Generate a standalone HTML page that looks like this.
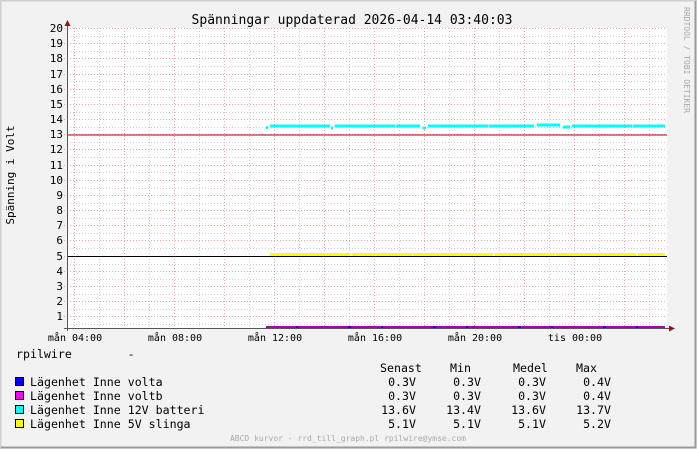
<!DOCTYPE html>
<html><head><meta charset="utf-8"><style>
html,body{margin:0;padding:0;background:#f2f2f2}
svg{display:block}
text{font-family:"DejaVu Sans Mono","Liberation Mono",monospace;fill:#000}
</style></head><body>
<svg width="697" height="449" viewBox="0 0 697 449" xmlns="http://www.w3.org/2000/svg" font-size="10">
<rect x="0" y="0" width="697" height="449" fill="#f2f2f2"/>
<path d="M0.5 449V0.5H697" stroke="#cfcfcf" stroke-width="2" fill="none"/>
<path d="M1 447.5H695.5V1" stroke="#9a9a9a" stroke-width="2" fill="none"/>
<rect x="67" y="28" width="600" height="300" fill="#fff"/>
<path stroke="#d0d0d0" stroke-width="1" stroke-dasharray="1,2" fill="none" d="M67 324.5H667M67 309.5H667M67 294.5H667M67 279.5H667M67 264.5H667M67 248.5H667M67 233.5H667M67 218.5H667M67 203.5H667M67 188.5H667M67 172.5H667M67 157.5H667M67 142.5H667M67 127.5H667M67 112.5H667M67 97.5H667M67 81.5H667M67 66.5H667M67 51.5H667M67 36.5H667"/>
<path stroke="#d0d0d0" stroke-width="1" stroke-dasharray="1,2" fill="none" d="M99.5 28V328M149.5 28V328M199.5 28V328M249.5 28V328M299.5 28V328M349.5 28V328M399.5 28V328M449.5 28V328M499.5 28V328M549.5 28V328M599.5 28V328M649.5 28V328"/>
<path stroke="#f4a6a6" stroke-width="1" stroke-dasharray="1,2" fill="none" d="M64 316.5H667M64 301.5H667M64 286.5H667M64 271.5H667M64 256.5H667M64 240.5H667M64 225.5H667M64 210.5H667M64 195.5H667M64 180.5H667M64 165.5H667M64 149.5H667M64 134.5H667M64 119.5H667M64 104.5H667M64 89.5H667M64 74.5H667M64 58.5H667M64 43.5H667M64 28.5H667"/>
<path stroke="#f4a6a6" stroke-width="1" stroke-dasharray="1,2" fill="none" d="M74.5 28V331M124.5 28V331M174.5 28V331M224.5 28V331M274.5 28V331M324.5 28V331M374.5 28V331M424.5 28V331M474.5 28V331M524.5 28V331M574.5 28V331M624.5 28V331"/>
<line x1="67" y1="135" x2="667" y2="135" stroke="#b00000" stroke-width="1"/>
<line x1="67" y1="256.5" x2="667" y2="256.5" stroke="#000" stroke-width="1"/>
<path d="M266 127.5H268M270 126H330M331 128H333M335 126H420M423 128H426M428 126H535M537 125H560M563 127H570M572 126H665" stroke="#00ffff" stroke-width="3" fill="none" stroke-dasharray="60,1,45,2,70,1"/>
<path d="M270 254.5H665" stroke="#ffff00" stroke-width="3" fill="none" stroke-dasharray="80,2,60,1"/>
<path d="M266 327H665" stroke="#0000ff" stroke-width="2" fill="none"/>
<path d="M266 327H665" stroke="#aa00aa" stroke-width="2" fill="none" stroke-dasharray="30,2,50,3"/>
<line x1="67.5" y1="24" x2="67.5" y2="331" stroke="#555" stroke-width="1"/>
<line x1="64" y1="328.5" x2="671" y2="328.5" stroke="#555" stroke-width="1"/>
<path d="M64.5 26L67.5 20L70.5 26Z" fill="#8b1a1a"/>
<path d="M669 325.5L675 328.5L669 331.5Z" fill="#8b1a1a"/>
<g text-anchor="end" font-size="11">
<text x="63" y="32">20</text><text x="63" y="47">19</text><text x="63" y="62">18</text><text x="63" y="78">17</text><text x="63" y="93">16</text><text x="63" y="108">15</text><text x="63" y="123">14</text><text x="63" y="138">13</text><text x="63" y="153">12</text><text x="63" y="169">11</text><text x="63" y="184">10</text><text x="63" y="199">9</text><text x="63" y="214">8</text><text x="63" y="229">7</text><text x="63" y="244">6</text><text x="63" y="260">5</text><text x="63" y="275">4</text><text x="63" y="290">3</text><text x="63" y="305">2</text><text x="63" y="320">1</text>
</g>
<g text-anchor="middle">
<text x="75" y="341">mån 04:00</text><text x="175" y="341">mån 08:00</text><text x="275" y="341">mån 12:00</text><text x="375" y="341">mån 16:00</text><text x="475" y="341">mån 20:00</text><text x="575" y="341">tis 00:00</text>
</g>
<text x="352" y="24" text-anchor="middle" font-size="13">Spänningar uppdaterad 2026-04-14 03:40:03</text>
<text transform="translate(14,175) rotate(-90)" text-anchor="middle" font-size="11">Spänning i Volt</text>
<text transform="translate(684,60) rotate(90)" text-anchor="middle" font-size="8" style="fill:#aaa">RRDTOOL / TOBI OETIKER</text>
<text x="16" y="358" font-size="11.6" xml:space="preserve">rpilwire        -</text>
<text x="380" y="372" font-size="11.6">Senast</text><text x="450" y="372" font-size="11.6">Min</text><text x="513" y="372" font-size="11.6">Medel</text><text x="576" y="372" font-size="11.6">Max</text>
<rect x="15.5" y="377.5" width="8" height="8" fill="#0000ff" stroke="#000"/>
<rect x="15.5" y="391.5" width="8" height="8" fill="#ff00ff" stroke="#000"/>
<rect x="15.5" y="405.5" width="8" height="8" fill="#00ffff" stroke="#000"/>
<rect x="15.5" y="419.5" width="8" height="8" fill="#ffff00" stroke="#000"/>
<g font-size="11.6">
<text x="30" y="386">Lägenhet Inne volta</text>
<text x="30" y="400">Lägenhet Inne voltb</text>
<text x="30" y="414">Lägenhet Inne 12V batteri</text>
<text x="30" y="428">Lägenhet Inne 5V slinga</text>
</g>
<g font-size="11.6" text-anchor="end">
<text x="416" y="386">0.3V</text><text x="481" y="386">0.3V</text><text x="546" y="386">0.3V</text><text x="611" y="386">0.4V</text>
<text x="416" y="400">0.3V</text><text x="481" y="400">0.3V</text><text x="546" y="400">0.3V</text><text x="611" y="400">0.4V</text>
<text x="416" y="414">13.6V</text><text x="481" y="414">13.4V</text><text x="546" y="414">13.6V</text><text x="611" y="414">13.7V</text>
<text x="416" y="428">5.1V</text><text x="481" y="428">5.1V</text><text x="546" y="428">5.1V</text><text x="611" y="428">5.2V</text>
</g>
<text x="348" y="441" text-anchor="middle" font-size="8" style="fill:#aaa">ABCD kurvor - rrd_till_graph.pl rpilwire@ymse.com</text>
</svg>
</body></html>
